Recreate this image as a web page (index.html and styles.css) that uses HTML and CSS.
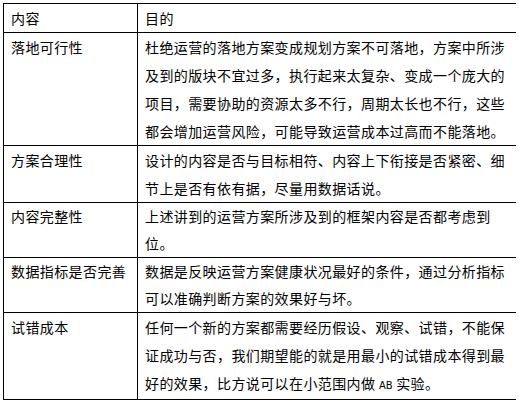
FILE: index.html
```
<!DOCTYPE html>
<html lang="zh-CN">
<head>
<meta charset="utf-8">
<title>运营方案</title>
<link rel="stylesheet" href="styles.css">
</head>
<body>
<div class="table">
  <div class="cell">内容</div>
  <div class="cell">目的</div>
  <div class="cell">落地可行性</div>
  <div class="cell">杜绝运营的落地方案变成规划方案不可落地，方案中所涉及到的版块不宜过多，执行起来太复杂、变成一个庞大的项目，需要协助的资源太多不行，周期太长也不行，这些都会增加运营风险，可能导致运营成本过高而不能落地。</div>
  <div class="cell">方案合理性</div>
  <div class="cell">设计的内容是否与目标相符、内容上下衔接是否紧密、细节上是否有依有据，尽量用数据话说。</div>
  <div class="cell compact">内容完整性</div>
  <div class="cell compact">上述讲到的运营方案所涉及到的框架内容是否都考虑到位。</div>
  <div class="cell compact">数据指标是否完善</div>
  <div class="cell compact">数据是反映运营方案健康状况最好的条件，通过分析指标可以准确判断方案的效果好与坏。</div>
  <div class="cell">试错成本</div>
  <div class="cell">任何一个新的方案都需要经历假设、观察、试错，不能保证成功与否，我们期望能的就是用最小的试错成本得到最好的效果，比方说可以在小范围内做 <span class="latin">AB</span> 实验。</div>
</div>
</body>
</html>
```
FILE: styles.css
```
html, body {
  background: #ffffff;
}
body {
  margin: 3px;
  font-family: "Noto Sans CJK SC", "Noto Sans", sans-serif;
  font-size: 14px;
  color: #000000;
}
.table {
  display: grid;
  grid-template-columns: 134px 379px;
  grid-template-rows: 29px 113px 57px 55px 55px 87px;
  width: 513px;
  border-left: 1px solid #000;
  border-top: 1px solid #000;
}
.cell {
  border-right: 1px solid #000;
  border-bottom: 1px solid #000;
  padding: 0 7px;
  line-height: 28px;
  letter-spacing: 0.4px;
}
.compact {
  line-height: 27px;
}
.latin {
  font-family: "DejaVu Sans", sans-serif;
  font-size: 10px;
  line-height: 1;
  letter-spacing: 0;
}
```
